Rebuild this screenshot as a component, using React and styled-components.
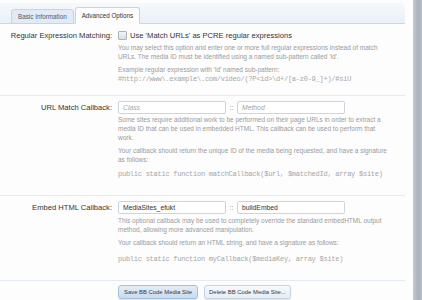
import React from 'react'
import styled, { createGlobalStyle } from 'styled-components'

const GlobalStyle = createGlobalStyle`
  html, body {
    margin: 0;
    padding: 0;
    background: #fdfdfe;
  }
  body {
    font-family: "Liberation Sans", Arial, sans-serif;
    color: #333;
  }
`

const Frame = styled.div`
  display: flex;
  width: 422px;
  height: 300px;
  overflow: hidden;
`

const Page = styled.div`
  flex: 1;
  padding-right: 8px;
  background: #fdfdfe;
`

const ScrollStrip = styled.div`
  width: 9px;
  background: linear-gradient(to right, #c3c9d1, #a9b1bb 60%, #b9c0c8);
`

const TabBar = styled.div`
  margin-top: 3px;
  height: 20px;
  display: flex;
  align-items: flex-end;
  padding-left: 11px;
  background: linear-gradient(to bottom, #f6f9fc, #e9f0f7);
  border-bottom: 1px solid #cad8e6;
  border-top-right-radius: 4px;
`

const Tab = styled.div`
  height: ${p => (p.$active ? 15 : 13)}px;
  margin-bottom: -1px;
  padding: 0 6px;
  display: flex;
  align-items: center;
  font-size: 6.3px;
  color: ${p => (p.$active ? '#333' : '#4a5a6e')};
  background: ${p => (p.$active ? '#fdfdfe' : '#e2ebf5')};
  border: 1px solid #c6d5e5;
  border-bottom-color: ${p => (p.$active ? '#fdfdfe' : '#c6d5e5')};
  border-radius: 3px 3px 0 0;
  & + & {
    margin-left: 1px;
  }
`

const FormRow = styled.div`
  display: grid;
  grid-template-columns: 112px 1fr;
  column-gap: 6px;
  padding: ${p => p.$top}px 0 ${p => p.$bottom}px;
  border-bottom: 1px solid #e3eaf1;
`

const Label = styled.div`
  text-align: right;
  font-size: 7.6px;
  line-height: ${p => p.$lh || 13}px;
  color: #333;
`

const CheckLine = styled.label`
  display: flex;
  align-items: center;
  gap: 3px;
  font-size: 7.6px;
  line-height: 11px;
  color: #333;
`

const Box = styled.span`
  width: 7px;
  height: 7px;
  border: 1px solid #a8b3bf;
  background: linear-gradient(#f4f4f4, #dedede);
  border-radius: 1px;
`

const Desc = styled.p`
  margin: ${p => p.$gap ?? 5}px 0 0;
  max-width: 272px;
  font-size: 6.5px;
  line-height: 8.6px;
  color: #9a9a9a;
`

const Code = styled.div`
  margin-top: ${p => p.$gap ?? 6}px;
  font-family: "Liberation Mono", "Courier New", monospace;
  font-size: 7px;
  letter-spacing: -0.25px;
  line-height: 8.6px;
  color: #a6a6a6;
  white-space: nowrap;
`

const Pair = styled.div`
  display: flex;
  align-items: center;
  height: 13px;
`

const Input = styled.div`
  box-sizing: border-box;
  width: ${p => p.$w}px;
  height: 13px;
  padding: 0 4px;
  display: flex;
  align-items: center;
  background: #fff;
  border: 1px solid #cbd5df;
  border-radius: 2px;
  font-size: 6.8px;
  color: ${p => (p.$placeholder ? '#a4a4a4' : '#333')};
  font-style: ${p => (p.$placeholder ? 'italic' : 'normal')};
`

const DoubleColon = styled.span`
  width: 11px;
  text-align: center;
  font-size: 7px;
  color: #888;
`

const Buttons = styled.div`
  display: flex;
  gap: 6px;
  padding: 4px 0 0 118px;
`

const Button = styled.div`
  height: 12px;
  padding: 0 ${p => (p.$primary ? 5 : 4)}px;
  display: flex;
  align-items: center;
  font-size: 5.9px;
  color: #2d3a48;
  border: 1px solid ${p => (p.$primary ? '#a8c0da' : '#c7d3e0')};
  border-radius: 3px;
  background: ${p => (p.$primary
    ? 'linear-gradient(#e3edf8, #c9dbee)'
    : 'linear-gradient(#f7f9fc, #e6edf5)')};
  box-shadow: 0 1px 1px rgba(120, 140, 170, 0.25);
`

export default function App() {
  return (
    <>
      <GlobalStyle />
      <Frame>
        <Page>
          <TabBar>
            <Tab>Basic Information</Tab>
            <Tab $active>Advanced Options</Tab>
          </TabBar>

          <FormRow $top={6} $bottom={12}>
            <Label $lh={11}>Regular Expression Matching:</Label>
            <div>
              <CheckLine>
                <Box />
                Use 'Match URLs' as PCRE regular expressions
              </CheckLine>
              <Desc $gap={3}>
                You may select this option and enter one or more full regular expressions instead of match
                URLs. The media ID must be identified using a named sub-pattern called 'id'.
              </Desc>
              <Desc>Example regular expression with 'id' named sub-pattern:</Desc>
              <Code $gap={0}>{'#http://www\\.example\\.com/video/(?P<id>\\d+/[a-z0-9_]+)/#siU'}</Code>
            </div>
          </FormRow>

          <FormRow $top={5} $bottom={16}>
            <Label>URL Match Callback:</Label>
            <div>
              <Pair>
                <Input $w={108} $placeholder>Class</Input>
                <DoubleColon>::</DoubleColon>
                <Input $w={108} $placeholder>Method</Input>
              </Pair>
              <Desc $gap={2}>
                Some sites require additional work to be performed on their page URLs in order to extract a
                media ID that can be used in embedded HTML. This callback can be used to perform that
                work.
              </Desc>
              <Desc>
                Your callback should return the unique ID of the media being requested, and have a signature
                as follows:
              </Desc>
              <Code>{'public static function matchCallback($url, $matchedId, array $site)'}</Code>
            </div>
          </FormRow>

          <FormRow $top={5} $bottom={17}>
            <Label>Embed HTML Callback:</Label>
            <div>
              <Pair>
                <Input $w={108}>MediaSites_efukt</Input>
                <DoubleColon>::</DoubleColon>
                <Input $w={108}>buildEmbed</Input>
              </Pair>
              <Desc $gap={3}>
                This optional callback may be used to completely override the standard embedHTML output
                method, allowing more advanced manipulation.
              </Desc>
              <Desc>Your callback should return an HTML string, and have a signature as follows:</Desc>
              <Code $gap={7}>{'public static function myCallback($mediaKey, array $site)'}</Code>
            </div>
          </FormRow>

          <Buttons>
            <Button $primary>Save BB Code Media Site</Button>
            <Button>Delete BB Code Media Site...</Button>
          </Buttons>
        </Page>
        <ScrollStrip />
      </Frame>
    </>
  )
}
